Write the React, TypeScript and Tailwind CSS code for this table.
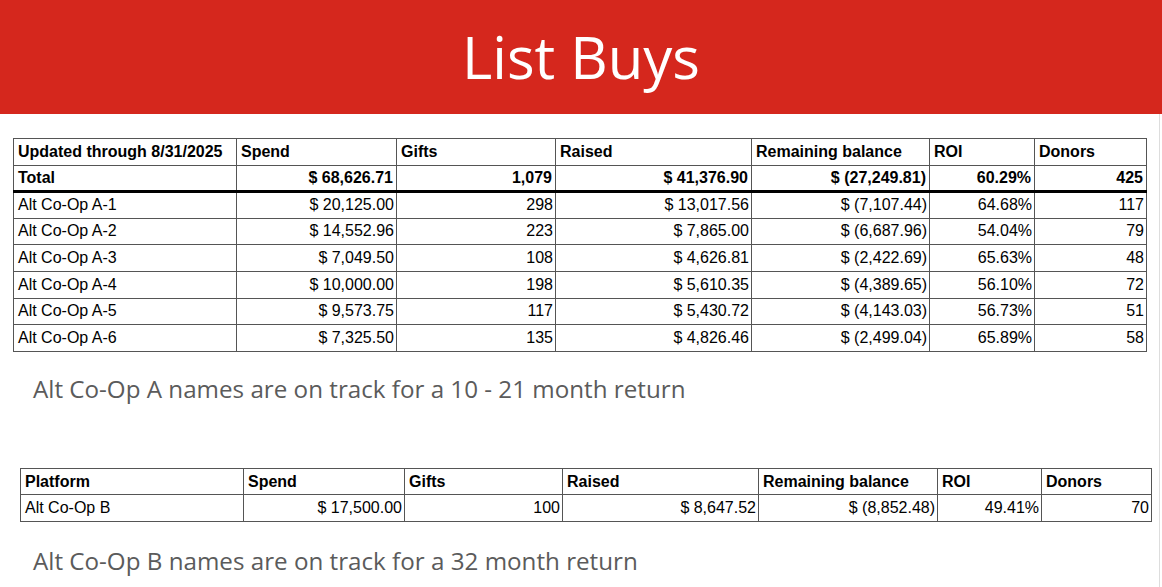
import React from "react";

type Row = string[];

const aHead = ["Updated through 8/31/2025", "Spend", "Gifts", "Raised", "Remaining balance", "ROI", "Donors"];
const aTotal = ["Total", "$ 68,626.71", "1,079", "$ 41,376.90", "$ (27,249.81)", "60.29%", "425"];
const aRows: Row[] = [
  ["Alt Co-Op A-1", "$ 20,125.00", "298", "$ 13,017.56", "$ (7,107.44)", "64.68%", "117"],
  ["Alt Co-Op A-2", "$ 14,552.96", "223", "$ 7,865.00", "$ (6,687.96)", "54.04%", "79"],
  ["Alt Co-Op A-3", "$ 7,049.50", "108", "$ 4,626.81", "$ (2,422.69)", "65.63%", "48"],
  ["Alt Co-Op A-4", "$ 10,000.00", "198", "$ 5,610.35", "$ (4,389.65)", "56.10%", "72"],
  ["Alt Co-Op A-5", "$ 9,573.75", "117", "$ 5,430.72", "$ (4,143.03)", "56.73%", "51"],
  ["Alt Co-Op A-6", "$ 7,325.50", "135", "$ 4,826.46", "$ (2,499.04)", "65.89%", "58"],
];
const aWidths = [223, 160, 159, 196, 178, 105, 112];

const bHead = ["Platform", "Spend", "Gifts", "Raised", "Remaining balance", "ROI", "Donors"];
const bRows: Row[] = [["Alt Co-Op B", "$ 17,500.00", "100", "$ 8,647.52", "$ (8,852.48)", "49.41%", "70"]];
const bWidths = [223, 161, 158, 196, 179, 104, 110];

const cell = "border border-[#555] px-[4px] py-0 whitespace-nowrap leading-none";

function Table({ head, total, rows, widths, className }: { head: Row; total?: Row; rows: Row[]; widths: number[]; className: string }) {
  return (
    <table className={`border-collapse table-fixed text-[16px] text-black font-['Liberation_Sans',Arial,sans-serif] ${className}`}>
      <colgroup>
        {widths.map((w, i) => (
          <col key={i} style={{ width: w }} />
        ))}
      </colgroup>
      <tbody>
        <tr className="h-[26.5px]">
          {head.map((h, i) => (
            <td key={i} className={`${cell} font-bold text-left`}>
              {h}
            </td>
          ))}
        </tr>
        {total && (
          <tr className="h-[26.5px]">
            {total.map((h, i) => (
              <td key={i} className={`${cell} font-bold border-b-[3px] border-b-black ${i === 0 ? "text-left" : "text-right pr-[3px]"}`}>
                {h}
              </td>
            ))}
          </tr>
        )}
        {rows.map((r, ri) => (
          <tr key={ri} className="h-[26.67px]">
            {r.map((h, i) => (
              <td key={i} className={`${cell} ${i === 0 ? "text-left" : "text-right pr-[2px]"}`}>
                {h}
              </td>
            ))}
          </tr>
        ))}
      </tbody>
    </table>
  );
}

export default function App() {
  return (
    <div className="w-[1162px] h-[587px] overflow-hidden bg-white">
      <header className="h-[114px] bg-[#d5271d] flex items-center justify-center">
        <h1 className="text-white text-[58px] leading-none font-['Open_Sans',sans-serif] font-normal">List Buys</h1>
      </header>
      <div className="w-[1160px] h-[473px] border-r border-[#dddddd] pt-[24px]">
        <Table head={aHead} total={aTotal} rows={aRows} widths={aWidths} className="ml-[13px] w-[1133px]" />
        <p className="ml-[33px] mt-[22px] text-[24.2px] leading-[30px] text-[#5b5b5b] font-['Open_Sans',sans-serif]">
          Alt Co-Op A names are on track for a 10 - 21 month return
        </p>
        <Table head={bHead} rows={bRows} widths={bWidths} className="ml-[20px] w-[1131px] mt-[64px]" />
        <p className="ml-[33px] mt-[24px] text-[24.2px] leading-[30px] text-[#5b5b5b] font-['Open_Sans',sans-serif]">
          Alt Co-Op B names are on track for a 32 month return
        </p>
      </div>
    </div>
  );
}
